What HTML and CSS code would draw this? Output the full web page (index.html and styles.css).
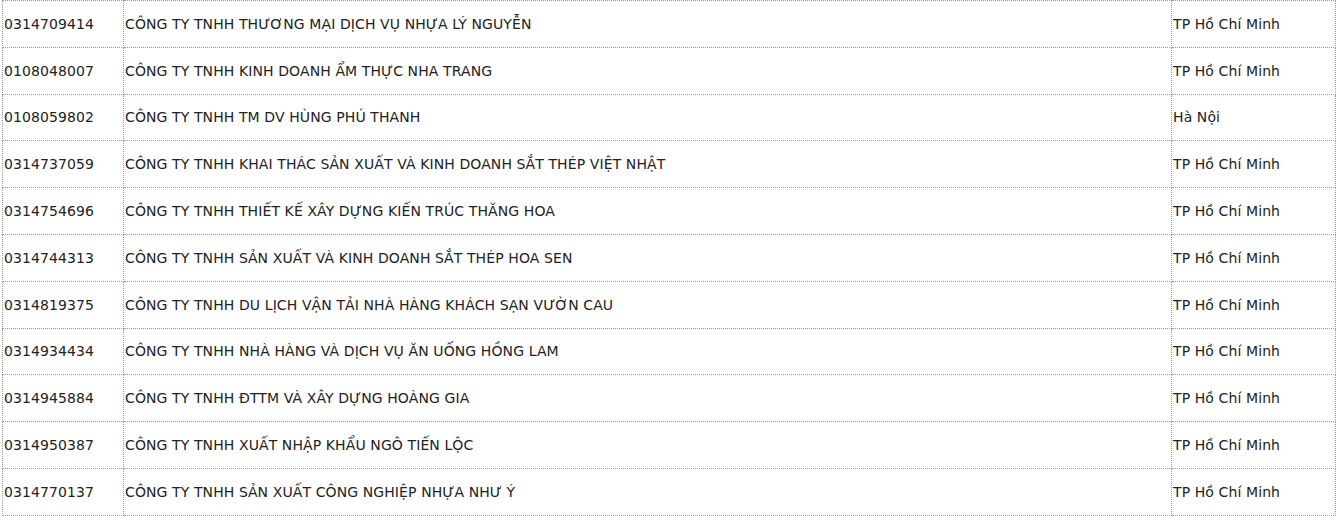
FILE: index.html
```html
<!DOCTYPE html>
<html lang="vi">
<head>
  <meta charset="utf-8">
  <title>Danh sách doanh nghiệp</title>
  <link rel="stylesheet" href="styles.css">
</head>
<body>
  <table class="company-list">
    <tr><td class="tax-code">0314709414</td><td class="name">CÔNG TY TNHH THƯƠNG MẠI DỊCH VỤ NHỰA LÝ NGUYỄN</td><td class="city">TP Hồ Chí Minh</td></tr>
    <tr><td class="tax-code">0108048007</td><td class="name">CÔNG TY TNHH KINH DOANH ẨM THỰC NHA TRANG</td><td class="city">TP Hồ Chí Minh</td></tr>
    <tr><td class="tax-code">0108059802</td><td class="name">CÔNG TY TNHH TM DV HÙNG PHÚ THANH</td><td class="city">Hà Nội</td></tr>
    <tr><td class="tax-code">0314737059</td><td class="name">CÔNG TY TNHH KHAI THÁC SẢN XUẤT VÀ KINH DOANH SẮT THÉP VIỆT NHẬT</td><td class="city">TP Hồ Chí Minh</td></tr>
    <tr><td class="tax-code">0314754696</td><td class="name">CÔNG TY TNHH THIẾT KẾ XÂY DỰNG KIẾN TRÚC THĂNG HOA</td><td class="city">TP Hồ Chí Minh</td></tr>
    <tr><td class="tax-code">0314744313</td><td class="name">CÔNG TY TNHH SẢN XUẤT VÀ KINH DOANH SẮT THÉP HOA SEN</td><td class="city">TP Hồ Chí Minh</td></tr>
    <tr><td class="tax-code">0314819375</td><td class="name">CÔNG TY TNHH DU LỊCH VẬN TẢI NHÀ HÀNG KHÁCH SẠN VƯỜN CAU</td><td class="city">TP Hồ Chí Minh</td></tr>
    <tr><td class="tax-code">0314934434</td><td class="name">CÔNG TY TNHH NHÀ HÀNG VÀ DỊCH VỤ ĂN UỐNG HỒNG LAM</td><td class="city">TP Hồ Chí Minh</td></tr>
    <tr><td class="tax-code">0314945884</td><td class="name">CÔNG TY TNHH ĐTTM VÀ XÂY DỰNG HOÀNG GIA</td><td class="city">TP Hồ Chí Minh</td></tr>
    <tr><td class="tax-code">0314950387</td><td class="name">CÔNG TY TNHH XUẤT NHẬP KHẨU NGÔ TIẾN LỘC</td><td class="city">TP Hồ Chí Minh</td></tr>
    <tr><td class="tax-code">0314770137</td><td class="name">CÔNG TY TNHH SẢN XUẤT CÔNG NGHIỆP NHỰA NHƯ Ý</td><td class="city">TP Hồ Chí Minh</td></tr>
  </table>
</body>
</html>
```

FILE: styles.css
```css
body {
  margin: 0;
  padding: 0 3px 0 2px;
  background-color: #FFFFFF;
  color: #222222;
  font-family: "DejaVu Sans", Verdana, sans-serif;
  font-size: 14px;
  letter-spacing: 0.1px;
}

.company-list {
  width: 100%;
  border-collapse: collapse;
}

.company-list td {
  height: 45.8px;
  padding: 0 1px;
  border: 1px dotted #999999;
  vertical-align: middle;
  white-space: nowrap;
}

.tax-code {
  width: 118px;
}

.city {
  width: 161px;
}
```
